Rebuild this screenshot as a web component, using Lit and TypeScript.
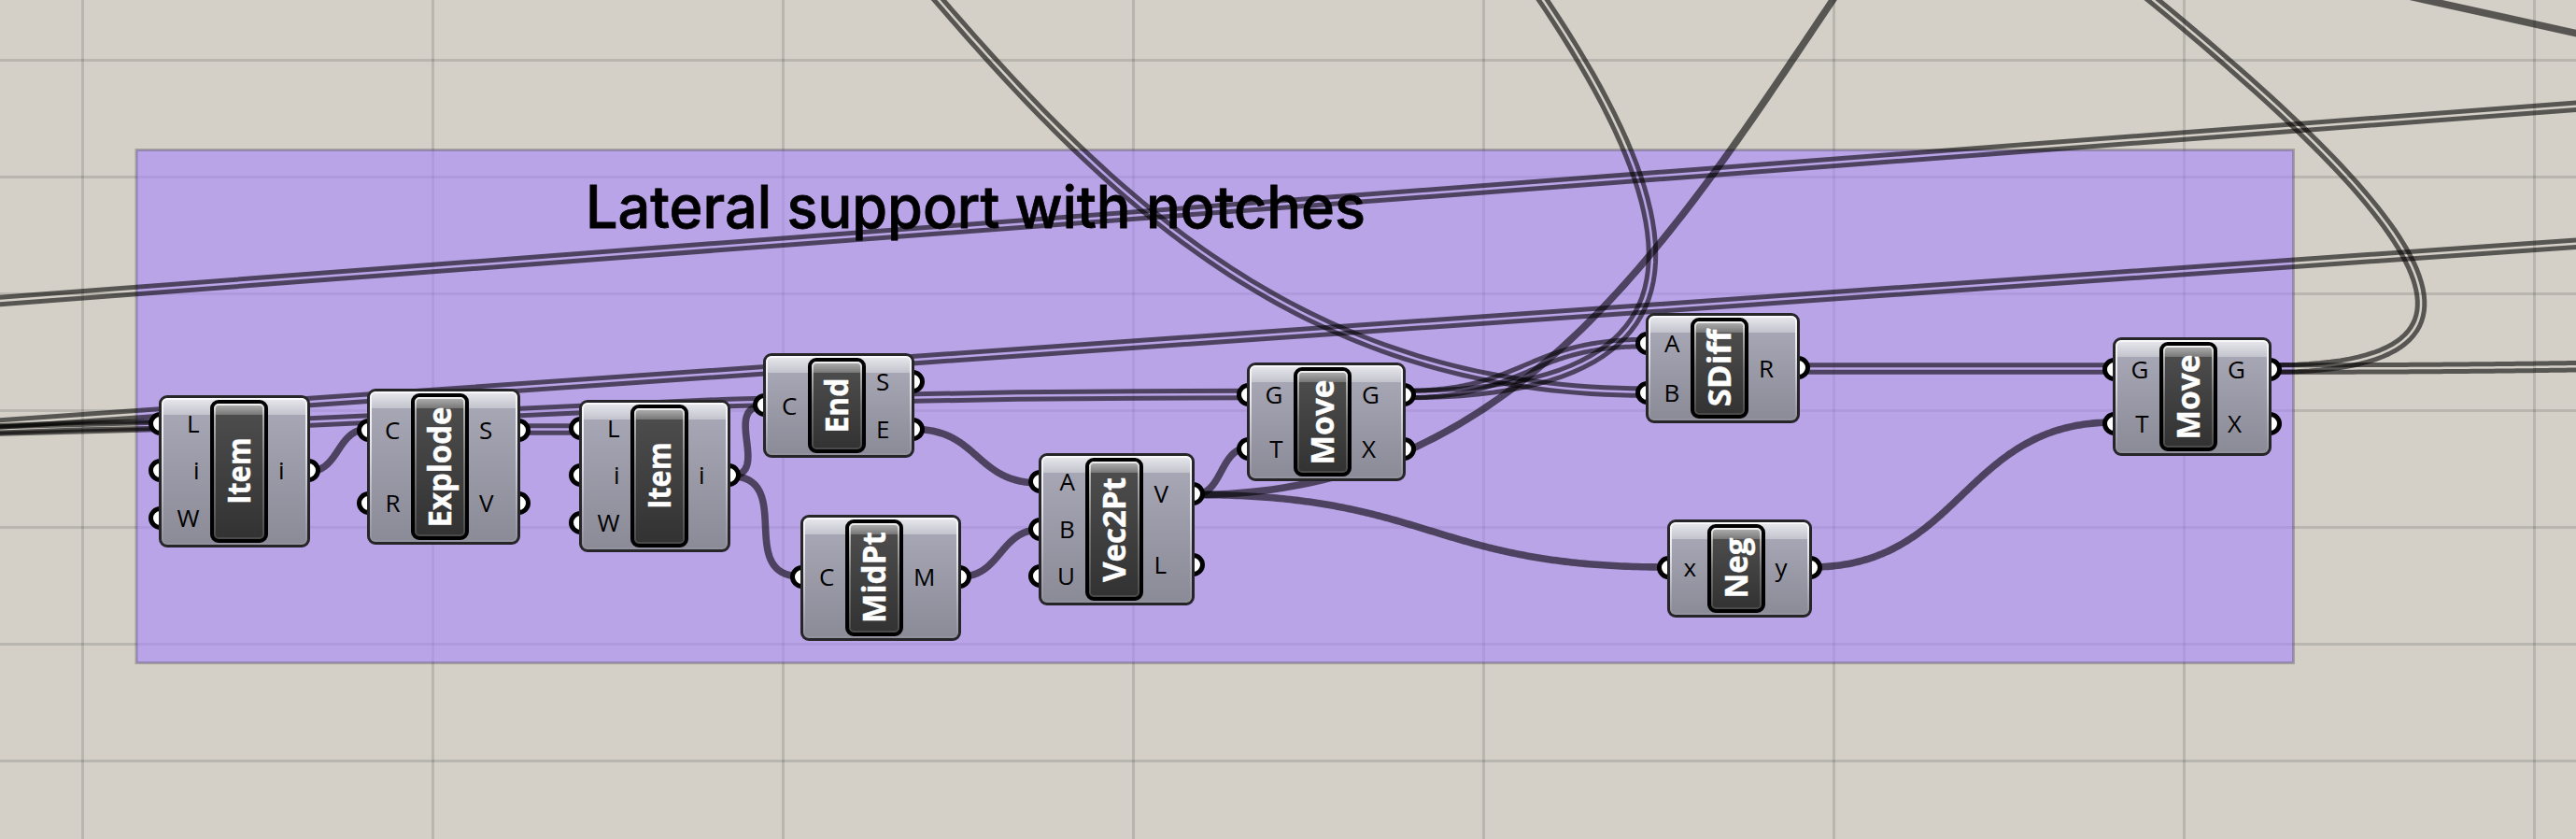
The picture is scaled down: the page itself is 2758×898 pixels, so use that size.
import { LitElement, html, css, svg } from "lit";
import { customElement, property } from "lit/decorators.js";
import { styleMap } from "lit/directives/style-map.js";

type Pt = [number, number];

interface NodeSpec {
  name: string;
  nameLength: number;
  x: number;
  y: number;
  w: number;
  h: number;
  /** distance from the node's left edge to the name capsule */
  cap: number;
  inputs: string[];
  outputs: string[];
}

interface Wire {
  from: Pt;
  to: Pt;
  /** length of the horizontal tangent handles; half the span when omitted */
  handle?: number;
  list?: boolean;
}

const WIDTH = 2758;
const HEIGHT = 898;

const NODES: NodeSpec[] = [
  { name: "Item", nameLength: 67.7, x: 170, y: 423, w: 162, h: 162.5, cap: 55, inputs: ["L", "i", "W"], outputs: ["i"] },
  { name: "Explode", nameLength: 125, x: 392.5, y: 416, w: 164.5, h: 167, cap: 47.5, inputs: ["C", "R"], outputs: ["S", "V"] },
  { name: "Item", nameLength: 67.7, x: 620, y: 428, w: 162, h: 162.5, cap: 55, inputs: ["L", "i", "W"], outputs: ["i"] },
  { name: "End", nameLength: 55, x: 817.4, y: 378.4, w: 162, h: 112, cap: 47.5, inputs: ["C"], outputs: ["S", "E"] },
  { name: "MidPt", nameLength: 94, x: 857.4, y: 551, w: 172, h: 134.5, cap: 47.5, inputs: ["C"], outputs: ["M"] },
  { name: "Vec2Pt", nameLength: 108, x: 1112.4, y: 485.4, w: 167, h: 162.5, cap: 50, inputs: ["A", "B", "U"], outputs: ["V", "L"] },
  { name: "Move", nameLength: 87, x: 1335, y: 388.4, w: 169.5, h: 127, cap: 50, inputs: ["G", "T"], outputs: ["G", "X"] },
  { name: "SDiff", nameLength: 78.7, x: 1762.4, y: 335.4, w: 164.5, h: 118, cap: 47.5, inputs: ["A", "B"], outputs: ["R"] },
  { name: "Neg", nameLength: 61, x: 1785, y: 556, w: 154.5, h: 104.5, cap: 42.5, inputs: ["x"], outputs: ["y"] },
  { name: "Move", nameLength: 87, x: 2262, y: 361, w: 170, h: 127, cap: 50, inputs: ["G", "T"], outputs: ["G", "X"] },
];

const WIRES: Wire[] = [
  { from: [331, 504.5], to: [393, 459.5], handle: 32 },
  { from: [556, 459.5], to: [621, 459.5], list: true },
  { from: [781, 509.5], to: [818, 434.5], handle: 46 },
  { from: [781, 509.5], to: [858, 617], handle: 72 },
  { from: [979, 459.5], to: [1113, 517], handle: 69 },
  { from: [1029, 617], to: [1113, 567], handle: 42 },
  { from: [1279, 529.5], to: [1336, 479.5], handle: 30 },
  { from: [1279, 529.5], to: [1785, 607] },
  { from: [1279.5, 529.5], to: [2605.5, -470.5], handle: 655 },
  { from: [1504, 422], to: [1763, 367], list: true },
  { from: [1504.5, 422], to: [837.5, -1578], handle: 1130, list: true },
  { from: [110.5, -580.5], to: [1762.5, 419.5], handle: 807, list: true },
  { from: [1926, 394.5], to: [2263, 394.5], list: true },
  { from: [1939, 607], to: [2263, 452] },
  { from: [2432, 394.5], to: [1659, -805.5], handle: 773, list: true },
  { from: [2432, 394.5], to: [3200, 388], list: true },
];

/** Wires whose ends both lie far outside the view, or that cross it nearly straight. */
const PASSING: { points: Pt[]; list: boolean }[] = [
  { points: [[-20, 323.5], [600, 276.7], [1500, 209], [2780, 112]], list: true },
  { points: [[-20, 455], [332, 430.1], [980, 385], [1480, 350], [2780, 259.2]], list: true },
  { points: [[-20, 461], [0, 460.6], [113, 457.6], [332, 451.5], [557, 441], [780, 430.9], [980, 425.5], [1090, 423.6], [1220, 422.4], [1336, 422]], list: true },
  { points: [[-20, 459.8], [0, 459.2], [90, 456], [172, 454.5]], list: true },
  { points: [[2550, -10.5], [2597, 0], [2680, 18.2], [2780, 40.6]], list: false },
];

function bezier({ from, to, handle }: Wire): Pt[] {
  const c = handle ?? Math.abs(to[0] - from[0]) / 2;
  const steps = 160;
  const pts: Pt[] = [];
  for (let i = 0; i <= steps; i++) {
    const t = i / steps;
    const m = 1 - t;
    const a = m * m * m, b = 3 * m * m * t, d = 3 * m * t * t, e = t * t * t;
    pts.push([
      a * from[0] + b * (from[0] + c) + d * (to[0] - c) + e * to[0],
      a * from[1] + b * from[1] + d * to[1] + e * to[1],
    ]);
  }
  return pts;
}

function offset(pts: Pt[], d: number): Pt[] {
  return pts.map((p, i) => {
    const a = pts[Math.max(0, i - 1)];
    const b = pts[Math.min(pts.length - 1, i + 1)];
    const dx = b[0] - a[0], dy = b[1] - a[1];
    const len = Math.hypot(dx, dy) || 1;
    return [p[0] - (dy / len) * d, p[1] + (dx / len) * d] as Pt;
  });
}

const toPath = (pts: Pt[]) => "M" + pts.map((p) => `${p[0].toFixed(2)} ${p[1].toFixed(2)}`).join("L");

function wirePath(pts: Pt[], list: boolean) {
  return list
    ? svg`<path class="wire strand" d=${toPath(offset(pts, -3.75)) + toPath(offset(pts, 3.75))}></path>`
    : svg`<path class="wire" d=${toPath(pts)}></path>`;
}

@customElement("gh-node")
export class GhNode extends LitElement {
  @property({ attribute: false }) node!: NodeSpec;

  static styles = css`
    :host {
      display: block;
      width: 100%;
      height: 100%;
      font-family: "Open Sans", "Noto Sans", sans-serif;
      color: #000;
    }
    .node {
      position: relative;
      display: flex;
      box-sizing: border-box;
      width: 100%;
      height: 100%;
    }
    .plate {
      position: absolute;
      inset: 0;
      box-sizing: border-box;
      border: 3px solid #262628;
      border-radius: 9px;
      background: linear-gradient(#e9e9ee 0, #c3c3cd 18px, #a6a6b4 18px, #8b8a97 100%);
    }
    .plate::after,
    .capsule::after {
      content: "";
      position: absolute;
      inset: 0;
      border-radius: 6px;
      padding: 2px;
      background: linear-gradient(#fafafc 0, #e6e6ec 30%, rgba(200, 200, 210, 0.5) 75%, rgba(160, 160, 172, 0.3) 100%);
      mask: linear-gradient(#000 0 0) content-box exclude, linear-gradient(#000 0 0);
    }
    .side {
      position: relative;
      display: flex;
      flex-direction: column;
      padding: 4.7px 0 6.3px;
      box-sizing: border-box;
    }
    .inputs {
      flex: none;
    }
    .outputs {
      flex: 1;
    }
    .port {
      position: relative;
      flex: 1;
      display: flex;
      align-items: center;
      font-size: 26px;
      line-height: 26px;
    }
    .inputs .port {
      justify-content: flex-end;
      padding-right: 11.5px;
    }
    .outputs .port {
      padding-left: 11px;
    }
    .grips {
      position: absolute;
      inset: 0;
      display: flex;
      justify-content: space-between;
    }
    .column {
      display: flex;
      flex-direction: column;
      padding: 5px 0 6px;
      width: 0;
    }
    .slot {
      flex: 1;
      display: flex;
      align-items: center;
      justify-content: center;
    }
    .grip {
      flex: none;
      box-sizing: border-box;
      width: 25px;
      height: 25px;
      border: 5px solid #000;
      border-radius: 50%;
      background: #fff;
    }
    .column.in .grip {
      margin-left: 3px;
    }
    .column.out .grip {
      margin-right: 3px;
    }
    .capsule {
      position: relative;
      flex: none;
      display: flex;
      align-items: center;
      justify-content: center;
      box-sizing: border-box;
      width: 62px;
      margin: 5px 0;
      border: 4px solid #000;
      border-radius: 9px;
      background: linear-gradient(#b5b5b5 0, #777 12px, #4c4c4c 12px, #323232 100%);
    }
    .capsule::after {
      border-radius: 5px;
      background: linear-gradient(#f2f2f2 0, #b0b0b0 14px, #757575 50%, rgba(90, 90, 90, 0.6) 100%);
    }
    .name {
      position: relative;
      z-index: 1;
      flex: none;
      overflow: visible;
      font-weight: 700;
      font-size: 34.3px;
      fill: #fff;
      stroke: #fff;
      stroke-width: 0.4;
    }
  `;

  render() {
    const { name, nameLength, cap, inputs, outputs } = this.node;
    return html`
      <div class="node">
        <div class="grips">
          <div class="column in">${inputs.map(() => html`<div class="slot"><i class="grip"></i></div>`)}</div>
          <div class="column out">${outputs.map(() => html`<div class="slot"><i class="grip"></i></div>`)}</div>
        </div>
        <div class="plate"></div>
        <div class="side inputs" style=${styleMap({ width: `${cap}px` })}>
          ${inputs.map((p) => html`<div class="port">${p}</div>`)}
        </div>
        <div class="capsule">
          <svg class="name" width="2" height="2" viewBox="-1 -1 2 2">
            <text
              transform="rotate(-90)"
              x=${-nameLength / 2 - 2}
              y="12"
              textLength=${nameLength + 4}
              lengthAdjust="spacingAndGlyphs"
            >${name}</text>
          </svg>
        </div>
        <div class="side outputs">${outputs.map((p) => html`<div class="port">${p}</div>`)}</div>
      </div>
    `;
  }
}

@customElement("app-root")
export class AppRoot extends LitElement {
  static styles = css`
    :host {
      display: block;
    }
    .canvas {
      position: relative;
      width: 2758px;
      height: 898px;
      overflow: hidden;
      background: #d4d0c8;
    }
    .backdrop {
      display: block;
    }
    .grid {
      stroke: rgba(0, 0, 0, 0.125);
      stroke-width: 3;
    }
    .group {
      fill: rgba(169, 135, 253, 0.6);
      stroke: rgba(0, 0, 0, 0.22);
      stroke-width: 3;
    }
    .wire {
      fill: none;
      stroke: #000;
      stroke-opacity: 0.59;
      stroke-width: 7.6;
      stroke-linejoin: round;
    }
    .strand {
      stroke-width: 5;
    }
    .title {
      font-family: Inter, "Liberation Sans", sans-serif;
      font-size: 63px;
      font-weight: 500;
      fill: #000;
      stroke: #000;
      stroke-width: 0.8;
    }
    .item {
      position: absolute;
    }
  `;

  render() {
    const columns = Array.from({ length: 8 }, (_, i) => 88.5 + i * 375);
    const rows = Array.from({ length: 7 }, (_, i) => 64.5 + i * 125);
    return html`
      <main class="canvas">
        <svg class="backdrop" width=${WIDTH} height=${HEIGHT} viewBox="0 0 2758 898">
          ${columns.map((x) => svg`<line class="grid" x1=${x} x2=${x} y1="0" y2=${HEIGHT}></line>`)}
          ${rows.map((y) => svg`<line class="grid" x1="0" x2=${WIDTH} y1=${y} y2=${y}></line>`)}
          <rect class="group" x="146" y="160.5" width="2309.5" height="549"></rect>
          <text class="title" x="627" y="244" textLength="835" lengthAdjust="spacingAndGlyphs">Lateral support with notches</text>
          ${PASSING.map((w) => wirePath(w.points, w.list))}
          ${WIRES.map((w) => wirePath(bezier(w), !!w.list))}
        </svg>
        ${NODES.map(
          (n) => html`<gh-node
            class="item"
            .node=${n}
            style=${styleMap({ left: `${n.x}px`, top: `${n.y}px`, width: `${n.w}px`, height: `${n.h}px` })}
          ></gh-node>`,
        )}
      </main>
    `;
  }
}
